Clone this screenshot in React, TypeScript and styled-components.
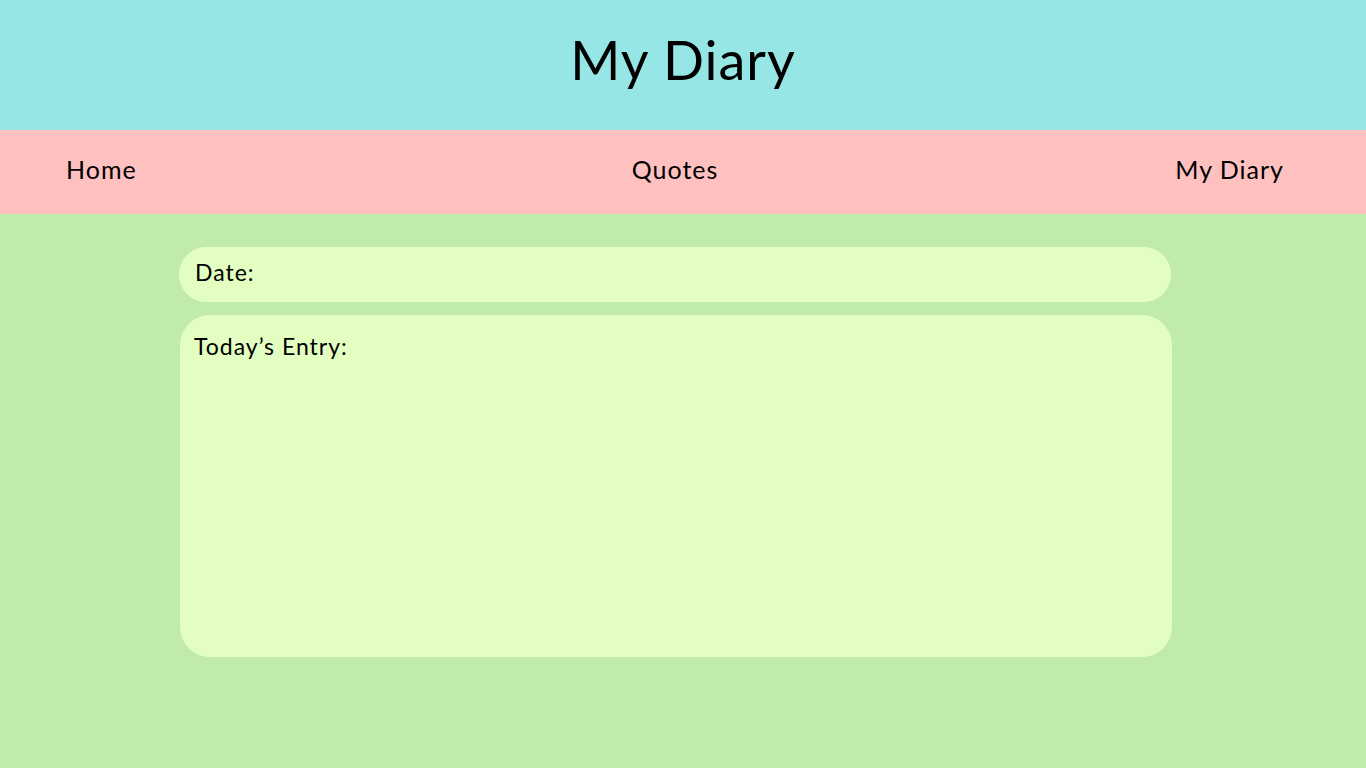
import React from "react";
import styled, { createGlobalStyle } from "styled-components";

const Global = createGlobalStyle`
  html, body { margin: 0; padding: 0; }
  body {
    background: #c1ebaa;
    font-family: Lato, "Noto Sans", sans-serif;
    color: #000;
  }
`;

const Page = styled.div`
  min-height: 768px;
  background: #c1ebaa;
  display: flex;
  flex-direction: column;
`;

const Header = styled.header`
  height: 130px;
  background: #96e6e6;
  display: flex;
  align-items: center;
  justify-content: center;
`;

const Title = styled.h1`
  margin: 0 0 12px;
  font-size: 54px;
  font-weight: 400;
  letter-spacing: 1px;
`;

const Nav = styled.nav`
  height: 84px;
  background: #ffc0c0;
  display: grid;
  grid-template-columns: 1fr auto 1fr;
  align-items: center;
  padding: 0 82px 0 66px;
  padding-bottom: 6px;
  box-sizing: border-box;
`;

const NavLink = styled.a<{ $align: "start" | "center" | "end" }>`
  justify-self: ${(p) => p.$align};
  font-size: 25px;
  letter-spacing: 1px;
  color: #000;
  text-decoration: none;
`;

const Main = styled.main`
  display: flex;
  flex-direction: column;
  gap: 13px;
  padding: 33px 0 0 179px;
`;

const Field = styled.div<{ $tall?: boolean; $radius: number }>`
  width: 992px;
  box-sizing: border-box;
  height: ${(p) => (p.$tall ? "342px" : "55px")};
  margin-left: ${(p) => (p.$tall ? "1px" : "0")};
  background: #e2fec0;
  border-radius: ${(p) => p.$radius}px;
  padding: ${(p) => (p.$tall ? "17px 14px" : "11px 16px")};
  font-size: 23px;
  letter-spacing: 1px;
`;

export default function App() {
  return (
    <>
      <Global />
      <Page>
        <Header>
          <Title>My Diary</Title>
        </Header>
        <Nav>
          <NavLink href="#" $align="start">Home</NavLink>
          <NavLink href="#" $align="center">Quotes</NavLink>
          <NavLink href="#" $align="end">My Diary</NavLink>
        </Nav>
        <Main>
          <Field $radius={27}>Date:</Field>
          <Field $tall $radius={30}>Today’s Entry:</Field>
        </Main>
      </Page>
    </>
  );
}
